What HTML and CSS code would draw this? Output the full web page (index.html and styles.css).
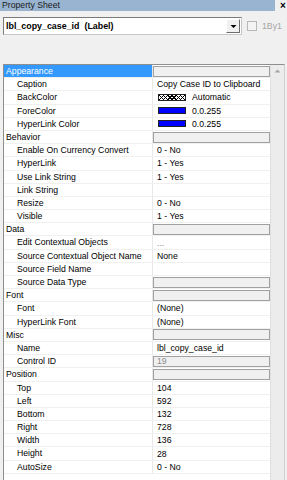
FILE: index.html
```html
<!DOCTYPE html>
<html lang="en">
<head>
    <meta charset="UTF-8">
    <title>Property Sheet</title>
    <link rel="stylesheet" href="styles.css">
</head>
<body>
    <div class="titlebar">
        <div class="caption">Property Sheet</div>
        <div class="close">&times;</div>
    </div>

    <div class="selector">
        <div class="combo">
            <span class="combo-text">lbl_copy_case_id&nbsp;&nbsp;(Label)</span>
            <span class="combo-btn">
                <svg width="7" height="5" viewBox="0 0 7 5"><path d="M0.5 1h6L3.5 4z" fill="#000"/></svg>
            </span>
        </div>
        <div class="by1"><span class="check"></span>1By1</div>
    </div>

    <div class="grid">
        <div class="rows">
            <div class="row cat selected"><div class="name">Appearance</div><div class="value"><span class="ro"></span></div></div>
            <div class="row"><div class="name">Caption</div><div class="value">Copy Case ID to Clipboard</div></div>
            <div class="row"><div class="name">BackColor</div><div class="value"><span class="swatch hatch"></span>Automatic</div></div>
            <div class="row"><div class="name">ForeColor</div><div class="value"><span class="swatch blue"></span>0.0.255</div></div>
            <div class="row"><div class="name">HyperLink Color</div><div class="value"><span class="swatch blue"></span>0.0.255</div></div>
            <div class="row cat"><div class="name">Behavior</div><div class="value"><span class="ro"></span></div></div>
            <div class="row"><div class="name">Enable On Currency Convert</div><div class="value">0 - No</div></div>
            <div class="row"><div class="name">HyperLink</div><div class="value">1 - Yes</div></div>
            <div class="row"><div class="name">Use Link String</div><div class="value">1 - Yes</div></div>
            <div class="row"><div class="name">Link String</div><div class="value"></div></div>
            <div class="row"><div class="name">Resize</div><div class="value">0 - No</div></div>
            <div class="row"><div class="name">Visible</div><div class="value">1 - Yes</div></div>
            <div class="row cat"><div class="name">Data</div><div class="value"><span class="ro"></span></div></div>
            <div class="row"><div class="name">Edit Contextual Objects</div><div class="value dim">...</div></div>
            <div class="row"><div class="name">Source Contextual Object Name</div><div class="value">None</div></div>
            <div class="row"><div class="name">Source Field Name</div><div class="value"></div></div>
            <div class="row"><div class="name">Source Data Type</div><div class="value"><span class="ro"></span></div></div>
            <div class="row cat"><div class="name">Font</div><div class="value"><span class="ro"></span></div></div>
            <div class="row"><div class="name">Font</div><div class="value">(None)</div></div>
            <div class="row"><div class="name">HyperLink Font</div><div class="value">(None)</div></div>
            <div class="row cat"><div class="name">Misc</div><div class="value"><span class="ro"></span></div></div>
            <div class="row"><div class="name">Name</div><div class="value">lbl_copy_case_id</div></div>
            <div class="row"><div class="name">Control ID</div><div class="value"><span class="ro">19</span></div></div>
            <div class="row cat"><div class="name">Position</div><div class="value"><span class="ro"></span></div></div>
            <div class="row"><div class="name">Top</div><div class="value">104</div></div>
            <div class="row"><div class="name">Left</div><div class="value">592</div></div>
            <div class="row"><div class="name">Bottom</div><div class="value">132</div></div>
            <div class="row"><div class="name">Right</div><div class="value">728</div></div>
            <div class="row"><div class="name">Width</div><div class="value">136</div></div>
            <div class="row"><div class="name">Height</div><div class="value">28</div></div>
            <div class="row"><div class="name">AutoSize</div><div class="value">0 - No</div></div>
        </div>
        <div class="scrollbar">
            <svg width="7" height="4" viewBox="0 0 7 4"><path d="M0.5 3.5h6L3.5 0.5z" fill="#a6a6a6"/></svg>
        </div>
    </div>
</body>
</html>
```

FILE: styles.css
```css
html, body {
    margin: 0;
    height: 480px;
    overflow: hidden;
}
body {
    background: #f0f0f0;
    font-family: 'Liberation Sans', Arial, sans-serif;
    font-size: 8.7px;
    color: #000;
}
.titlebar {
    display: flex;
    align-items: center;
    height: 11px;
}
.caption {
    width: 273px;
    height: 11px;
    line-height: 11px;
    padding-left: 2px;
    background: #99b4d1;
    color: #1a1a1a;
}
.close {
    margin-left: 5px;
    font-size: 10px;
    font-weight: bold;
    line-height: 11px;
}
.selector {
    display: flex;
    align-items: center;
    margin-top: 6px;
    padding-left: 3px;
}
.combo {
    display: flex;
    align-items: center;
    justify-content: space-between;
    box-sizing: border-box;
    width: 239px;
    height: 18px;
    background: #fff;
    border: 1px solid #7a7a7a;
    border-right-color: #c8c8c8;
    border-bottom-color: #c8c8c8;
    padding: 0 1px 0 2px;
}
.combo-text {
    font-weight: bold;
    font-size: 8.9px;
}
.combo-btn {
    display: flex;
    align-items: center;
    justify-content: center;
    box-sizing: border-box;
    width: 14px;
    height: 14px;
    background: #f0f0f0;
    border: 1px solid #fff;
    border-right-color: #6d6d6d;
    border-bottom-color: #6d6d6d;
}
.by1 {
    display: flex;
    align-items: center;
    margin-left: 5px;
    color: #a6a6a6;
}
.check {
    box-sizing: border-box;
    width: 10px;
    height: 10px;
    border: 1px solid #b8b8b8;
    background: #f4f4f4;
    margin-right: 5px;
}
.grid {
    display: flex;
    box-sizing: border-box;
    width: 282px;
    height: 420px;
    margin: 29px 0 0 3px;
    border: 1px solid #8e8e8e;
    border-right-color: #d0d0d0;
    overflow: hidden;
}
.rows {
    width: 266px;
    background: #fff;
}
.row {
    display: flex;
    box-sizing: border-box;
    height: 13.2px;
    line-height: 12px;
    border-bottom: 1px solid #f0f0f0;
}
.name {
    box-sizing: border-box;
    width: 149px;
    padding-left: 13px;
    border-right: 1px solid #e8e8e8;
    white-space: nowrap;
    overflow: hidden;
}
.cat .name {
    padding-left: 2px;
}
.selected .name {
    background: #3399ff;
    color: #fff;
}
.value {
    display: flex;
    align-items: center;
    flex: 1;
    padding-left: 4px;
    white-space: nowrap;
}
.value.dim {
    color: #8a8a8a;
}
.ro {
    box-sizing: border-box;
    display: block;
    width: 117px;
    height: 11px;
    margin-left: -4px;
    padding-left: 3px;
    line-height: 9px;
    background: #f0f0f0;
    border: 1px solid #a0a0a0;
    color: #8a8a8a;
}
.swatch {
    box-sizing: border-box;
    width: 28px;
    height: 7px;
    margin: 0 6px 0 1px;
    border: 1px solid #222;
}
.swatch.blue {
    background: #0000ff;
}
.swatch.hatch {
    background-color: #fff;
    background-image:
        repeating-linear-gradient(45deg, #000 0 1px, transparent 1px 3px),
        repeating-linear-gradient(-45deg, #000 0 1px, transparent 1px 3px);
}
.scrollbar {
    display: flex;
    justify-content: center;
    box-sizing: border-box;
    width: 14px;
    padding-top: 4px;
    background: #ececec;
    border-left: 1px solid #e0e0e0;
}
```
